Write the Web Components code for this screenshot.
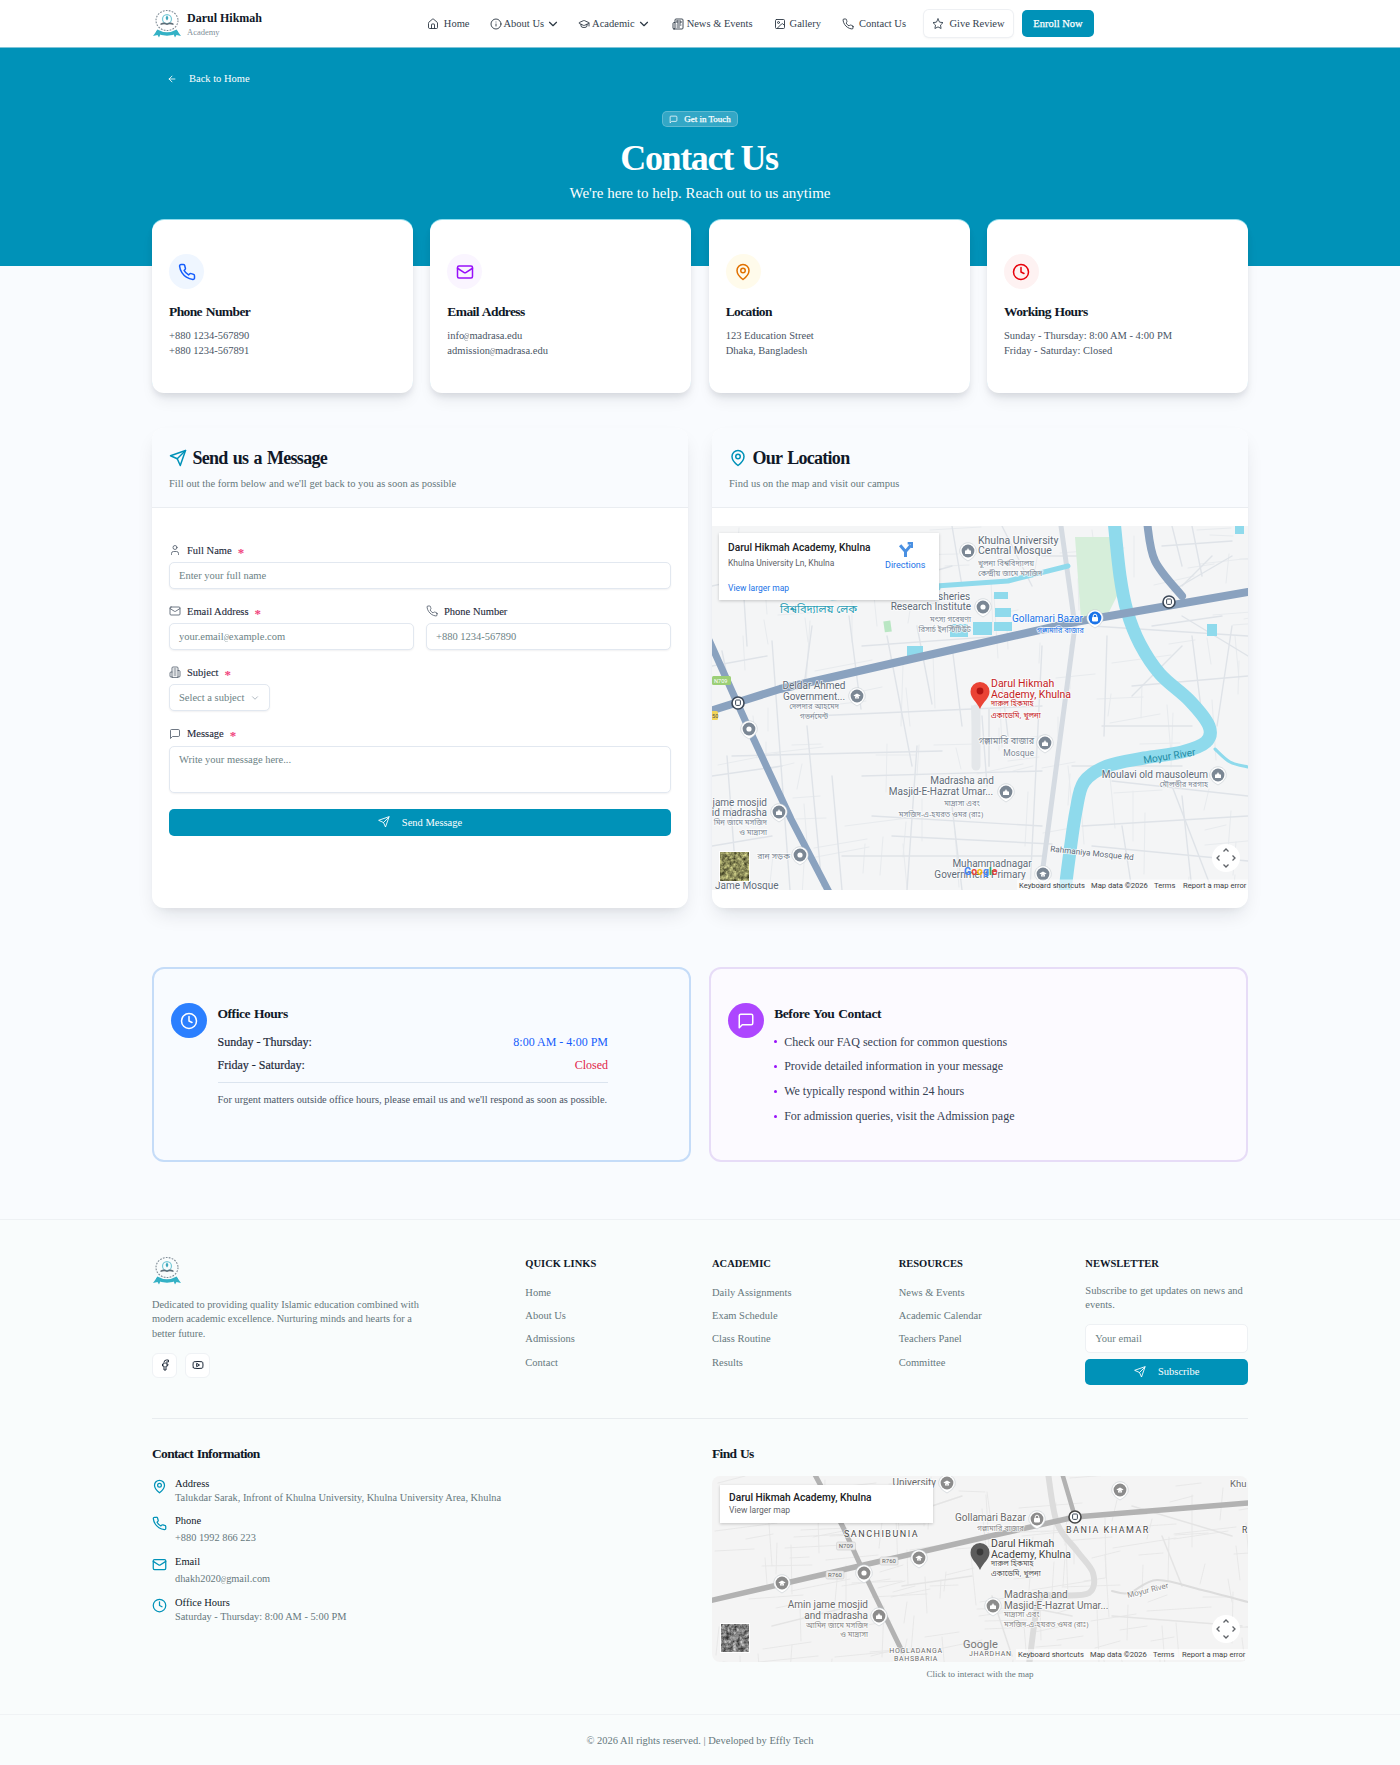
<!DOCTYPE html>
<html lang="en"><head><meta charset="utf-8"><title>Contact Us</title>
<style>
html,body{margin:0;padding:0;background:#f9fbfe;font-family:"Liberation Serif",serif;color:#0f172a}
</style></head>
<body>
<site-nav></site-nav>
<page-hero></page-hero>
<main-wrap>
  <div style="display:grid;grid-template-columns:repeat(4,1fr);gap:17.33px;margin-top:-47px;position:relative">
    <info-card icon="phone" tone="#155dfc" bg="#eff6ff" heading="Phone Number" l1="+880 1234-567890" l2="+880 1234-567891"></info-card>
    <info-card icon="mail" tone="#9810fa" bg="#faf5ff" heading="Email Address" l1="info@madrasa.edu" l2="admission@madrasa.edu"></info-card>
    <info-card icon="pin" tone="#e17100" bg="#fffbeb" heading="Location" l1="123 Education Street" l2="Dhaka, Bangladesh"></info-card>
    <info-card icon="clock" tone="#e7000b" bg="#fef2f2" heading="Working Hours" l1="Sunday - Thursday: 8:00 AM - 4:00 PM" l2="Friday - Saturday: Closed"></info-card>
  </div>
  <div style="display:grid;grid-template-columns:1fr 1fr;gap:24px;margin-top:35px">
    <panel-card icon="send" heading="Send us a Message" sub="Fill out the form below and we'll get back to you as soon as possible"><contact-form></contact-form></panel-card>
    <panel-card icon="pin" heading="Our Location" sub="Find us on the map and visit our campus" tight="1"><map-view kind="color"></map-view></panel-card>
  </div>
  <div style="display:grid;grid-template-columns:1fr 1fr;gap:17.33px;margin-top:59px">
    <hours-card></hours-card>
    <before-card></before-card>
  </div>
</main-wrap>
<site-footer></site-footer>
<script>
const P={
home:'<path d="M15 21v-8a1 1 0 0 0-1-1h-4a1 1 0 0 0-1 1v8"/><path d="M3 10a2 2 0 0 1 .709-1.528l7-5.999a2 2 0 0 1 2.582 0l7 5.999A2 2 0 0 1 21 10v9a2 2 0 0 1-2 2H5a2 2 0 0 1-2-2z"/>',
info:'<circle cx="12" cy="12" r="10"/><path d="M12 16v-4"/><path d="M12 8h.01"/>',
chev:'<path d="m6 9 6 6 6-6"/>',
cap:'<path d="M21.42 10.922a1 1 0 0 0-.019-1.838L12.83 5.18a2 2 0 0 0-1.66 0L2.6 9.08a1 1 0 0 0 0 1.832l8.57 3.908a2 2 0 0 0 1.66 0z"/><path d="M22 10v6"/><path d="M6 12.5V16a6 3 0 0 0 12 0v-3.5"/>',
news:'<path d="M4 22h16a2 2 0 0 0 2-2V4a2 2 0 0 0-2-2H8a2 2 0 0 0-2 2v16a2 2 0 0 1-2 2Zm0 0a2 2 0 0 1-2-2v-9c0-1.1.9-2 2-2h2"/><path d="M18 14h-8"/><path d="M15 18h-5"/><path d="M10 6h8v4h-8V6Z"/>',
image:'<rect x="3" y="3" width="18" height="18" rx="2"/><circle cx="9" cy="9" r="2"/><path d="m21 15-3.086-3.086a2 2 0 0 0-2.828 0L6 21"/>',
phone:'<path d="M22 16.92v3a2 2 0 0 1-2.18 2 19.79 19.79 0 0 1-8.63-3.07 19.5 19.5 0 0 1-6-6 19.79 19.79 0 0 1-3.07-8.67A2 2 0 0 1 4.11 2h3a2 2 0 0 1 2 1.72 12.84 12.84 0 0 0 .7 2.81 2 2 0 0 1-.45 2.11L8.09 9.91a16 16 0 0 0 6 6l1.27-1.27a2 2 0 0 1 2.11-.45 12.84 12.84 0 0 0 2.81.7A2 2 0 0 1 22 16.92z"/>',
star:'<polygon points="12 2 15.09 8.26 22 9.27 17 14.14 18.18 21.02 12 17.77 5.82 21.02 7 14.14 2 9.27 8.91 8.26 12 2"/>',
left:'<path d="m12 19-7-7 7-7"/><path d="M19 12H5"/>',
msg:'<path d="M21 15a2 2 0 0 1-2 2H7l-4 4V5a2 2 0 0 1 2-2h14a2 2 0 0 1 2 2z"/>',
mail:'<rect x="2" y="4" width="20" height="16" rx="2"/><path d="m22 7-8.97 5.7a1.94 1.94 0 0 1-2.06 0L2 7"/>',
pin:'<path d="M20 10c0 6-8 12-8 12s-8-6-8-12a8 8 0 0 1 16 0Z"/><circle cx="12" cy="10" r="3"/>',
clock:'<circle cx="12" cy="12" r="10"/><polyline points="12 6 12 12 16 14"/>',
send:'<path d="m22 2-7 20-4-9-9-4Z"/><path d="M22 2 11 13"/>',
user:'<path d="M19 21v-2a4 4 0 0 0-4-4H9a4 4 0 0 0-4 4v2"/><circle cx="12" cy="7" r="4"/>',
bld:'<path d="M6 22V4a2 2 0 0 1 2-2h8a2 2 0 0 1 2 2v18Z"/><path d="M6 12H4a2 2 0 0 0-2 2v6a2 2 0 0 0 2 2h2"/><path d="M18 9h2a2 2 0 0 1 2 2v9a2 2 0 0 1-2 2h-2"/><path d="M10 6h4"/><path d="M10 10h4"/><path d="M10 14h4"/><path d="M10 18h4"/>',
fb:'<path d="M18 2h-3a5 5 0 0 0-5 5v3H7v4h3v8h4v-8h3l1-4h-4V7a1 1 0 0 1 1-1h3z"/>',
yt:'<path d="M2.5 17a24.12 24.12 0 0 1 0-10 2 2 0 0 1 1.4-1.4 49.56 49.56 0 0 1 16.2 0A2 2 0 0 1 21.5 7a24.12 24.12 0 0 1 0 10 2 2 0 0 1-1.4 1.4 49.55 49.55 0 0 1-16.2 0A2 2 0 0 1 2.5 17"/><path d="m10 15 5-3-5-3z"/>'
};
const AT=s=>s.replace(/@/g,'<span style="display:inline-block;width:5.2px;font-size:7.6px;line-height:1;transform:scaleX(.74);transform-origin:0 50%;margin:0">@</span>');
function def(name,css,html,init){
  customElements.define(name,class extends HTMLElement{
    connectedCallback(){
      if(this.shadowRoot)return;
      const r=this.attachShadow({mode:'open'});
      const a=n=>this.getAttribute(n)||'';
      r.innerHTML='<style>'+css+'</style>'+(typeof html==='function'?html(a):html);
      if(init)init(r,a);
    }
  });
}
def('x-icon',':host{display:inline-flex;flex:none;line-height:0}svg{display:block}',a=>{
  const s=a('size')||12,w=a('sw')||2;
  return `<svg width="${s}" height="${s}" viewBox="0 0 24 24" fill="none" stroke="currentColor" stroke-width="${w}" stroke-linecap="round" stroke-linejoin="round">${P[a('n')]}</svg>`;
});
def('brand-logo',':host{display:inline-block;line-height:0}',a=>{
  const s=a('size')||30;
  return `<svg width="${s}" height="${s}" viewBox="0 0 60 60" fill="none">
  <ellipse cx="30" cy="23" rx="22" ry="20" stroke="#7d8a94" stroke-width="2.2" stroke-dasharray="3.500 2.500"/>
  <circle cx="30" cy="20" r="9" stroke="#79cbd8" stroke-width="2.500"/>
  <path d="M30 13c3 3 4 6 0 10-4-4-3-7 0-10z" fill="#3fa9bd"/>
  <path d="M17 29c6-3 9-2 13 0 4-2 7-3 13 0v3c-6-2-9-2-13 0-4-2-7-2-13 0z" fill="#5e6c76"/>
  <path d="M9 44q21 12 42 0" stroke="#34b1c5" stroke-width="7"/>
  <path d="M10 43l-8 11 9-2 3 5 4-9zM50 43l8 11-9-2-3 5-4-9z" fill="#34b1c5"/>
  </svg>`;
});
def('main-wrap',':host{display:block;width:1096px;margin:0 auto}','<slot></slot>');

def('nav-item',`:host{display:inline-flex;align-items:center;font-size:10.5px;color:#33414e;white-space:nowrap}x-icon{color:#2b3743}`,a=>
 `<x-icon n="${a('i')}" size="12" sw="1.8" style="margin-right:${a('g')||5}px"></x-icon><slot></slot>${a('m')?'<x-icon n="chev" size="14" sw="2" style="margin:0 0 0 2px"></x-icon>':''}`);
def('site-nav',`:host{display:block;background:#fff;border-bottom:1px solid #7fc4d8}
.in{height:47px;box-sizing:border-box;padding:0 306px 0 152px;display:flex;align-items:center}
.b{display:flex;align-items:center;gap:5px;margin-right:auto}
.t{display:flex;flex-direction:column;line-height:1}
.t b{font-size:12px;color:#101828;margin-top:2px}.t span{font-size:8.5px;color:#7f8f99;margin-top:4px}
.n{display:flex;align-items:center;gap:21px}
.btn{display:inline-flex;align-items:center;height:27px;box-sizing:border-box;border-radius:5px;font-size:10.5px;white-space:nowrap}
.g{width:89px;justify-content:center;gap:5px;background:#fff;color:#33414e;box-shadow:0 0 0 1px #eef0f3,0 1px 3px rgba(0,0,0,.08);margin-left:18px}
.e{width:72px;justify-content:center;background:#0092b8;color:#fff;margin-left:9px;-webkit-text-stroke:.25px #fff}`,
`<div class="in"><div class="b"><brand-logo size="30"></brand-logo><div class="t"><b>Darul Hikmah</b><span>Academy</span></div></div>
<div class="n"><nav-item i="home">Home</nav-item><nav-item i="info" m="1" g="2" style="margin-left:-1px">About Us</nav-item><nav-item i="cap" m="1" g="2" style="margin-left:-3px">Academic</nav-item><nav-item i="news" g="3">News &amp; Events</nav-item><nav-item i="image" g="4">Gallery</nav-item><nav-item i="phone" g="5">Contact Us</nav-item></div>
<span class="btn g"><x-icon n="star" size="12" sw="1.8"></x-icon>Give Review</span><span class="btn e">Enroll Now</span></div>`);
def('page-hero',`:host{display:block;background:#0092b8;color:#fff;height:218px;box-sizing:border-box;padding-top:23px}
.w{width:1096px;margin:0 auto;display:flex;flex-direction:column}
.back{display:flex;align-items:center;gap:12px;font-size:10.5px;line-height:16px;margin-left:15px}
.c{display:flex;flex-direction:column;align-items:center}
.bd{display:inline-flex;align-items:center;gap:6px;height:16px;padding:0 6px;box-sizing:border-box;border-radius:5px;background:rgba(255,255,255,.2);border:1px solid rgba(255,255,255,.22);font-size:9px;-webkit-text-stroke:.25px #fff;margin-top:24px}
h1{font-size:36px;line-height:40px;margin:11px 0 0;font-weight:700;letter-spacing:-1.35px;padding-right:2px}
p{font-size:15px;line-height:20px;margin:5px 0 0}`,
`<div class="w"><div class="back"><x-icon n="left" size="10" sw="2"></x-icon><span>Back to Home</span></div>
<div class="c"><span class="bd"><x-icon n="msg" size="9" sw="2"></x-icon>Get in Touch</span><h1>Contact Us</h1><p>We're here to help. Reach out to us anytime</p></div></div>`);
def('info-card',`:host{display:block;height:173px;margin-top:1px;box-sizing:border-box;background:#fff;border-radius:12px;padding:34px 17px 0;box-shadow:0 -1px 0 #8fdcec,0 4px 6px -1px rgba(15,23,42,.1),0 10px 15px -3px rgba(15,23,42,.07)}
.i{width:35px;height:35px;border-radius:50%;display:flex;align-items:center;justify-content:center}
h3{font-size:13.5px;line-height:18px;margin:14px 0 0;color:#101828;letter-spacing:-.6px;word-spacing:1px}
p{font-size:10.5px;line-height:15.2px;margin:7px 0 0;color:#4a5565}`,
a=>`<div class="i" style="background:${a('bg')};color:${a('tone')}"><x-icon n="${a('icon')}" size="18" sw="2"></x-icon></div><h3>${a('heading')}</h3><p>${AT(a('l1'))}<br>${AT(a('l2'))}</p>`);
def('panel-card',`:host{display:flex;flex-direction:column;height:480px;background:#fff;border-radius:12px;box-shadow:0 10px 20px -5px rgba(15,23,42,.12),0 4px 8px -4px rgba(15,23,42,.06);overflow:hidden}
.h{height:80px;box-sizing:border-box;padding:19px 17px 0;background:#f9fbfe;border-bottom:1px solid #eaedf1;flex:none}
.t{display:flex;align-items:center;gap:5.5px;color:#0092b8}
h2{font-size:18px;line-height:22px;margin:0;color:#101828;letter-spacing:-.72px;word-spacing:1.4px}
p{font-size:10.5px;line-height:14px;margin:8px 0 0;color:#66787c}
.b{flex:1;min-height:0}`,
a=>`<div class="h"><div class="t"><x-icon n="${a('icon')}" size="18" sw="2"></x-icon><h2>${a('heading')}</h2></div><p>${a('sub')}</p></div><div class="b" style="padding:${a('tight')?'18px 0 0':'32px 17px 0'}"><slot></slot></div>`);
def('form-field',`:host{display:block}
.l{display:flex;align-items:center;gap:6px;height:20px;font-size:10.5px;font-weight:400;color:#1d2939;-webkit-text-stroke:.1px #1d2939}
.l x-icon{color:#4a5565}
.s{color:#f0447c;font-size:13px;font-weight:700;line-height:1;-webkit-text-stroke:0;position:relative;top:2px}
.ctl{margin-top:2px;box-sizing:border-box;border:1px solid #e2e8f0;border-radius:5px;background:#fff;height:27px;padding:0 9px;display:flex;align-items:center;font-size:10.5px;color:#6c8285;box-shadow:0 1px 2px rgba(15,23,42,.06)}`,
a=>`<div class="l"><x-icon n="${a('i')}" size="12" sw="1.6"></x-icon>${a('label')}${a('req')?'<span class="s">*</span>':''}</div><div class="ctl" style="${a('cs')}"><span>${AT(a('ph'))}</span><slot></slot></div>`);
def('contact-form',`:host{display:block}
.c{display:flex;flex-direction:column;gap:12.2px}
.r{display:grid;grid-template-columns:1fr 1fr;gap:12px}
.btn{height:27px;border-radius:5px;background:#0092b8;color:#fff;display:flex;align-items:center;justify-content:center;gap:12px;font-size:10.5px;margin-top:4px}`,
`<div class="c"><form-field i="user" label="Full Name" req="1" ph="Enter your full name"></form-field>
<div class="r"><form-field i="mail" label="Email Address" req="1" ph="your.email@example.com"></form-field><form-field i="phone" label="Phone Number" ph="+880 1234-567890"></form-field></div>
<form-field i="bld" label="Subject" req="1" ph="Select a subject" cs="width:101px;justify-content:space-between"><x-icon n="chev" size="10" sw="1.6" style="color:#8a97a3"></x-icon></form-field>
<form-field i="msg" label="Message" req="1" ph="Write your message here..." cs="height:47px;align-items:flex-start;padding-top:7px"></form-field>
<div class="btn"><x-icon n="send" size="12" sw="1.8"></x-icon>Send Message</div></div>`);
def('hours-card',`:host{display:flex;gap:10.5px;height:195px;box-sizing:border-box;background:#f8fbff;border:2px solid #c5dcf8;border-radius:12px;padding:34px 17px 0 17px}
.i{width:36px;height:35px;border-radius:50%;background:#2b7fff;color:#fff;display:flex;align-items:center;justify-content:center;flex:none}
.m{width:390.5px;padding-top:2px}
h3{font-size:13.5px;line-height:18px;margin:0 0 11px;color:#101828;letter-spacing:-.45px;word-spacing:1px}
.r{display:flex;justify-content:space-between;font-size:12px;line-height:16px;margin-bottom:7px;color:#1d2939;-webkit-text-stroke:.2px #1d2939}
.r span{-webkit-text-stroke:0}
hr{border:0;border-top:1px solid #dbe4ef;margin:0}
p{font-size:10.4px;line-height:14px;margin:10px 0 0;color:#4a5565;white-space:nowrap}`,
`<div class="i"><x-icon n="clock" size="18" sw="2"></x-icon></div><div class="m"><h3>Office Hours</h3>
<div class="r">Sunday - Thursday:<span style="color:#155dfc">8:00 AM - 4:00 PM</span></div><div class="r" style="margin-bottom:9px">Friday - Saturday:<span style="color:#e11d48">Closed</span></div><hr><p>For urgent matters outside office hours, please email us and we'll respond as soon as possible.</p></div>`);
def('before-card',`:host{display:flex;gap:10.5px;height:195px;box-sizing:border-box;background:#fcfaff;border:2px solid #e7dcf7;border-radius:12px;padding:34px 17px 0 17px}
.i{width:36px;height:35px;border-radius:50%;background:#ad46ff;color:#fff;display:flex;align-items:center;justify-content:center;flex:none}
.m{padding-top:2px}
h3{font-size:13.5px;line-height:18px;margin:0 0 10.5px;color:#101828;letter-spacing:-.42px;word-spacing:1px}
ul{list-style:none;margin:0;padding:0}
li{font-size:12px;line-height:16px;margin-bottom:8.9px;color:#364153;display:flex;align-items:center;gap:7px}
li::before{content:"";width:3px;height:3px;border-radius:50%;background:#9810fa}`,
`<div class="i"><x-icon n="msg" size="18" sw="2"></x-icon></div><div class="m"><h3>Before You Contact</h3><ul><li>Check our FAQ section for common questions</li><li>Provide detailed information in your message</li><li>We typically respond within 24 hours</li><li>For admission queries, visit the Admission page</li></ul></div>`);
def('footer-col',`:host{display:block}
h4{font-size:10.5px;line-height:14px;margin:0 0 15px;color:#101828}
.l{display:flex;flex-direction:column;gap:8.8px;font-size:10.5px;line-height:14.4px;color:#66787c}`,
a=>`<h4>${a('t')}</h4><div class="l">${a('links').split('|').map(x=>`<span>${x}</span>`).join('')}</div>`);
def('contact-line',`:host{display:flex;gap:8px}
x-icon{color:#0092b8;margin-top:2px}
b{display:block;font-weight:400;font-size:10.5px;line-height:14px;color:#101828}
div span.v{display:block;font-size:10.35px;line-height:14px;color:#66787c}`,
a=>`<x-icon n="${a('i')}" size="15" sw="2"></x-icon><div><b>${a('k')}</b><span class="v" style="margin-top:${a('g')||0}px">${AT(a('v'))}</span></div>`);
def('site-footer',`:host{display:block;background:#f9fcfc;border-top:1px solid #eef1f4;margin-top:57px}
.w{width:1096px;margin:0 auto}
.top{display:grid;grid-template-columns:repeat(6,1fr);gap:24px;padding:37px 0 0;height:199px;box-sizing:border-box;border-bottom:1px solid #e8ecef}
.b{grid-column:span 2}
.lg{margin-top:-1px;line-height:0}
.b p{font-size:10.35px;line-height:14.4px;color:#66787c;margin:12px 0 0;width:280px}
.s{display:flex;gap:8px;margin-top:11.5px}
.s span{width:25px;height:25px;box-sizing:border-box;border-radius:6px;background:#fff;border:1px solid #eff2f5;display:flex;align-items:center;justify-content:center;color:#1d2939}
.news h4{font-size:10.5px;line-height:14px;margin:0 0 12.5px;color:#101828}
.news p{font-size:10.5px;line-height:14.6px;margin:0;color:#66787c}
.inp{height:29px;box-sizing:border-box;border:1px solid #eef1f4;border-radius:5px;background:#fff;display:flex;align-items:center;padding:0 9px;font-size:10.5px;color:#6c8285;margin-top:11px}
.btn{height:26px;border-radius:5px;background:#0092b8;color:#fff;display:flex;align-items:center;justify-content:center;gap:12px;font-size:10.5px;margin-top:6px}
.two{display:grid;grid-template-columns:1fr 1fr;gap:24px;padding-top:27px;height:295px;box-sizing:border-box}
h3{font-size:13.5px;line-height:16px;margin:0;color:#101828;letter-spacing:-.68px;word-spacing:1px}
.cl{display:flex;flex-direction:column;gap:10px;margin-top:15px}
.cap{text-align:center;font-size:9px;line-height:12px;color:#66787c;margin-top:6px}
.mp{margin-top:14px;height:186px}
.bot{border-top:1px solid #f0f3f5;height:50px;box-sizing:border-box;padding-top:2px;display:flex;align-items:center;justify-content:center;font-size:10.5px;color:#66787c}`,
`<div class="w"><div class="top"><div class="b"><div class="lg"><brand-logo size="30"></brand-logo></div><p>Dedicated to providing quality Islamic education combined with modern academic excellence. Nurturing minds and hearts for a better future.</p><div class="s"><span><x-icon n="fb" size="12" sw="2"></x-icon></span><span><x-icon n="yt" size="12" sw="2"></x-icon></span></div></div>
<footer-col t="QUICK LINKS" links="Home|About Us|Admissions|Contact"></footer-col>
<footer-col t="ACADEMIC" links="Daily Assignments|Exam Schedule|Class Routine|Results"></footer-col>
<footer-col t="RESOURCES" links="News &amp; Events|Academic Calendar|Teachers Panel|Committee"></footer-col>
<div class="news"><h4>NEWSLETTER</h4><p>Subscribe to get updates on news and events.</p><div class="inp">Your email</div><div class="btn"><x-icon n="send" size="12" sw="1.8"></x-icon>Subscribe</div></div></div>
<div class="two"><div><h3>Contact Information</h3><div class="cl">
<contact-line i="pin" k="Address" v="Talukdar Sarak, Infront of Khulna University, Khulna University Area, Khulna" style="margin-bottom:-1px"></contact-line>
<contact-line i="phone" k="Phone" v="+880 1992 866 223" g="3"></contact-line>
<contact-line i="mail" k="Email" v="dhakh2020@gmail.com" g="3"></contact-line>
<contact-line i="clock" k="Office Hours" v="Saturday - Thursday: 8:00 AM - 5:00 PM"></contact-line></div></div>
<div><h3>Find Us</h3><div class="mp"><map-view kind="gray"></map-view></div><div class="cap">Click to interact with the map</div></div></div></div>
<div class="bot">&copy; 2026 All rights reserved. | Developed by Effly Tech</div>`);

let DY=0;
function T(x,y,s,sz,fill,o){o=o||{};y+=DY;return `<text x="${x}" y="${y}" font-size="${sz}" fill="${fill}" ${o.a?`text-anchor="${o.a}"`:''} ${o.b?'font-weight="700"':''} ${o.r?`transform="rotate(${o.r} ${x} ${y})"`:''} ${o.ls?`letter-spacing="${o.ls}"`:''} paint-order="stroke" stroke="${o.ns?'none':'#fff'}" stroke-width="${o.ns?0:1.6}" stroke-opacity=".75">${s}</text>`}
function L(pts,c,w){return `<polyline points="${pts}" fill="none" stroke="${c}" stroke-width="${w}" stroke-linejoin="round" stroke-linecap="round"/>`}
function S(p,c,w){let d=`M${p[0][0]} ${p[0][1]}`;
  for(let i=0;i<p.length-1;i++){const a=p[i-1]||p[i],b=p[i],e=p[i+1],f=p[i+2]||e;
    d+=`C${(b[0]+(e[0]-a[0])/6).toFixed(1)} ${(b[1]+(e[1]-a[1])/6).toFixed(1)} ${(e[0]-(f[0]-b[0])/6).toFixed(1)} ${(e[1]-(f[1]-b[1])/6).toFixed(1)} ${e[0]} ${e[1]}`}
  return `<path d="${d}" fill="none" stroke="${c}" stroke-width="${w}" stroke-linecap="round"/>`}
function alleys(W,H,n,c,w,seed){let s='',r=seed;const R=()=>(r=(r*16807)%2147483647)/2147483647;
  for(let i=0;i<n;i++){const x=R()*W,y=R()*H,l=18+R()*46,v=R()<.5;
    const dx=v?(R()-.5)*10:l,dy=v?l:(R()-.5)*10-(l*.12);
    s+=`<path d="M${x.toFixed(0)} ${y.toFixed(0)}l${dx.toFixed(0)} ${dy.toFixed(0)}" stroke="${c}" stroke-width="${w}" stroke-linecap="round" fill="none"/>`;}
  return s}
function POI(x,y,c,k){
  let inner='';
  if(k==='m')inner=`<path d="M${x-3} ${y+3}v-3l1.5-1.5v1.5l1.5-3 1.5 3v-1.5l1.5 1.5v3z" fill="#fff"/>`;
  if(k==='c')inner=`<path d="M${x-3.6} ${y-.6}l3.6-2 3.6 2-3.6 2zM${x-2} ${y+.8}v1.6h4v-1.6l-2 1z" fill="#fff"/>`;
  if(k==='o')inner=`<circle cx="${x}" cy="${y}" r="2.6" fill="#fff"/>`;
  if(k==='l')inner=`<rect x="${x-3}" y="${y-1}" width="6" height="4.4" rx=".8" fill="#fff"/><path d="M${x-1.8} ${y-1}v-1a1.8 1.8 0 0 1 3.6 0v1" stroke="#fff" fill="none"/>`;
  return `<path d="M${x-7.8} ${y+2.5}a8.2 8.2 0 1 1 15.6 0q-2.2 5-7.8 7.5q-5.6-2.5-7.8-7.5z" fill="#fff" stroke="#b9c0c7" stroke-width=".5"/><circle cx="${x}" cy="${y}" r="6.4" fill="${c}"/>${inner}`;
}
function BUS(x,y,c){return `<circle cx="${x}" cy="${y}" r="6" fill="#fff" stroke="${c}" stroke-width="1.6"/><rect x="${x-2.4}" y="${y-3}" width="4.8" height="5.4" rx="1" fill="none" stroke="#3c4858" stroke-width="1"/>`}
function FS(x,y){const g='#5f6368';return `<circle cx="${x}" cy="${y}" r="14" fill="#fff"/><g fill="none" stroke="${g}" stroke-width="1.3"><path d="M${x-2.5} ${y-6.5}l2.5-2.5 2.5 2.5M${x-2.5} ${y+6.5}l2.5 2.5 2.5-2.5M${x-6.5} ${y-2.5}l-2.5 2.5 2.5 2.5M${x+6.5} ${y-2.5}l2.5 2.5-2.5 2.5"/></g>`}
function thumb(x,y,w,h,m){return `<filter id="sat" x="0" y="0" width="100%" height="100%" color-interpolation-filters="sRGB"><feTurbulence type="fractalNoise" baseFrequency=".28" numOctaves="3" seed="4"/><feColorMatrix values="${m}"/></filter><rect x="${x-1}" y="${y-1}" width="${w+2}" height="${h+2}" fill="#fff"/><rect x="${x}" y="${y}" width="${w}" height="${h}" filter="url(#sat)"/>`}
function attrib(y,xs,fill){const t=['Keyboard shortcuts','Map data &#169;2026','Terms','Report a map error'];
  return `<rect x="${xs[0]-2}" y="${y+DY-8}" width="${536-xs[0]+2}" height="11" fill="#fff" opacity=".6"/>`+t.map((s,i)=>T(xs[i],y,s,7.6,fill,{ns:1})).join('')}
const BN='"Noto Sans","Noto Sans Bengali","Lohit Bengali","DejaVu Sans",sans-serif';
function colorMap(){
  DY=0;
  const st='#dfe3e8';let s=`<rect width="536" height="364" fill="#f4f5f6"/>`;
  s+=alleys(536,364,120,'#e8ebee',1,7331);
  [[137,90,149,183],[60,115,78,364],[10,125,20,175],[175,110,200,240],[205,100,220,178],[240,120,250,200],[260,180,262,240],[290,160,296,210],[330,120,318,364],[395,110,392,210],[420,170,470,120],[440,100,510,90],[470,90,536,130],[420,160,536,150],[390,200,480,200],[150,250,330,245],[20,230,230,225],[100,190,330,180],[160,290,330,300],[180,310,340,318],[370,300,536,290],[380,320,536,335],[400,255,536,270],[460,260,500,364],[380,100,536,110],[480,110,490,190],[520,100,505,200],[150,120,360,105],[170,60,240,40],[240,0,250,60],[0,60,90,40],[30,40,35,120],[0,140,55,130],[100,100,92,160],[95,200,110,360],[205,220,195,364],[240,280,250,364],[270,190,275,260],[360,240,470,240],[0,250,70,240],[15,230,25,364],[120,250,130,364],[0,320,60,310],[130,330,330,330],[410,300,420,364],[470,270,480,364],[290,0,320,60],[330,30,400,30],[450,20,520,15],[460,0,470,40],[480,0,490,50],[500,30,470,60],[460,65,520,30]].forEach(q=>{s+=L(`${q[0]},${q[1]} ${q[2]},${q[3]}`,st,1.4)});
  s+=L('264,183 264,240',"#e4e7ea",9)+L('277,183 277,240',"#e4e7ea",2);
  s+=`<path d="M363 11l36 0 8 55-10 20-28 8z" fill="#d6eeda"/><rect x="172" y="95" width="7" height="11" fill="#b9e6c3" transform="rotate(-8 175 100)"/>`;
  s+=L('349,0 363,100 328,364','#d5dbe2',5);
  [[261,96,19,13],[238,98,18,13],[282,96,18,9],[283,82,16,9],[282,66,14,7],[195,120,16,10],[495,98,10,12],[523,0,9,8]].forEach(q=>s+=`<rect x="${q[0]}" y="${q[1]}" width="${q[2]}" height="${q[3]}" fill="#8fdaec"/>`);
  s+=L('224,60 296,55 356,40','#8fdaec',5)+L('120,72 226,62','#8fdaec',5);
  s+=S([[402,-6],[408,50],[415,85],[428,118],[448,148],[478,175],[497,200],[494,216],[470,226],[432,232],[395,240],[372,256],[364,285],[358,325],[352,372]],'#8fdaec',13);
  s+=S([[503,223],[518,236],[536,241]],'#8fdaec',3);
  const rd='#8aa2bf';
  s+=L('-5,186 68,163 208,131 363,96 536,66',rd,8)+L('-3,114 37,203 79,293 118,368',rd,7)+S([[435,-4],[443,35],[470,70]],rd,8);
  s+=`<rect x="0" y="150" width="19" height="9" rx="1.5" fill="#9ccf76"/>`+T(2,157,'N709',5.6,'#fff',{ns:1});
  s+=`<rect x="-3" y="185" width="9" height="9" rx="1.5" fill="#f3d558"/>`+T(0,192,'50',5.6,'#555',{ns:1});
  const g='#5f6b78',g2='#7b8794';
  s+=POI(256,25,'#7b8794','m')+POI(271,81,'#7b8794','o')+POI(383,92,'#1a73e8','l')+POI(145,170,'#7b8794','c')+POI(37,203,'#7b8794','o')+POI(333,217,'#7b8794','m')+POI(294,266,'#7b8794','m')+POI(506,249,'#7b8794','m')+POI(67,286,'#7b8794','m')+POI(88,329,'#7b8794','o')+POI(331,348,'#7b8794','c');
  s+=BUS(457,76,'#3c4858')+BUS(26,177,'#3c4858');
  DY=1.5;
  s+=T(266,16,'Khulna University',10.5,g)+T(266,26,'Central Mosque',10.5,g);
  s+=T(226,72,'sheries',10,g)+T(259,82,'Research Institute',10,g,{a:'end'});
  s+=T(300,94,'Gollamari Bazar',10,'#1a73e8');
  s+=T(102,161,'Deldar Ahmed',10,g,{a:'middle'})+T(102,172,'Government...',10,g,{a:'middle'});
  s+=T(322,228,'Mosque',8.5,g2,{a:'end'});
  s+=T(250,256,'Madrasha and',10,g,{a:'middle'})+T(229,267,'Masjid-E-Hazrat Umar...',10,g,{a:'middle'});
  s+=T(496,250,'Moulavi old mausoleum',10,g,{a:'end'});
  s+=T(432,236,'Moyur River',10,'#1e8aa3',{r:-9,ns:1});
  s+=T(338,324,'Rahmaniya Mosque Rd',8.2,g,{r:6});
  s+=T(55,278,'jame mosjid',10,g,{a:'end'})+T(55,288,'id madrasha',10,g,{a:'end'});
  s+=T(3,361,'Jame Mosque',10,g);
  s+=T(280,339,'Muhammadnagar',10,g,{a:'middle'})+T(268,350,'Government Primary',10,g,{a:'middle'});
  s+=`<path d="M268 156a9.5 9.5 0 0 1 9.5 9.5c0 7-6 9.5-9.500 17.500c-3.500-8-9.500-10.500-9.500-17.500A9.500 9.500 0 0 1 268 156z" fill="#ea4335"/><circle cx="268" cy="165" r="3.400" fill="#b31412"/>`;
  s+=T(279,159,'Darul Hikmah',10.5,'#c5221f')+T(279,170,'Academy, Khulna',10.5,'#c5221f');
  s+=`<g font-family='${BN}'>`+T(266,38,'খুলনা বিশ্ববিদ্যালয়',7.6,g2)+T(266,48,'কেন্দ্রীয় জামে মসজিদ',7.6,g2)+T(259,94,'মৎস্য গবেষণা',7.6,g2,{a:'end'})+T(259,104,'রিসার্চ ইনস্টিটিউট',7.6,g2,{a:'end'})+T(68,85,'বিশ্ববিদ্যালয় লেক',11,'#2a9db5')+T(325,105,'গল্লামারি বাজার',7.6,'#1a73e8')+T(102,181,'দেলদার আহমেদ',7.6,g2,{a:'middle'})+T(102,191,'গভর্নমেন্ট',7.6,g2,{a:'middle'})+T(279,178,'দারুল হিকমাহ',7.6,'#c5221f')+T(279,190,'একাডেমি, খুলনা',7.6,'#c5221f')+T(322,216,'গল্লামারি বাজার',9,g2,{a:'end'})+T(250,278,'মাদ্রাসা এবং',7.6,g2,{a:'middle'})+T(229,289,'মসজিদ-এ-হযরত ওমর (রাঃ)',7.6,g2,{a:'middle'})+T(496,259,'মৌলভীর দরগাহ',7.6,g2,{a:'end'})+T(55,297,'মিন জামে মসজিদ',7.6,g2,{a:'end'})+T(55,307,'ও মাদ্রাসা',7.6,g2,{a:'end'})+T(78,331,'রান সড়ক',8.5,g2,{a:'end'})+`</g>`;
  s+=thumb(8,326,29,29,'1 0 0 0 .05 1 0 0 0 .05 .7 0 0 0 0 0 0 0 0 1');
  s+=`<text x="252" y="348.500" font-size="10.500" font-weight="700"><tspan fill="#4285f4">G</tspan><tspan fill="#ea4335">o</tspan><tspan fill="#fbbc05">o</tspan><tspan fill="#4285f4">g</tspan><tspan fill="#34a853">l</tspan><tspan fill="#ea4335">e</tspan></text>`;
  s+=attrib(360,[307,379,442,471],'#3c4043')+FS(514,332);
  DY=0;
  return s;
}
function grayMap(){
  DY=0;
  let s=`<rect width="536" height="186" fill="#f4f4f4"/>`;
  s+=alleys(536,186,150,'#e7e7e7',.9,90421);
  [[220,30,250,20],[280,120,300,180],[60,150,140,130],[420,30,520,60],[400,140,530,150],[450,60,470,110],[190,110,260,100],[310,130,360,140]].forEach(q=>s+=L(`${q[0]},${q[1]} ${q[2]},${q[3]}`,'#e4e4e4',1.5));
  s+=S([[336,-3],[345,47],[365,75],[381,97],[377,117],[345,120],[327,125],[317,190]],'#dcdcdc',6)+S([[400,115],[417,117],[445,104],[490,114],[536,126]],'#dcdcdc',2);
  s+=L('-3,125 143,91 274,61 363,41 536,27','#b2b2b2',5.500)+L('102,-3 131,51 152,97 190,175','#b2b2b2',5)+L('350,-3 363,41','#b2b2b2',4.500);
  const g='#6b6b6b',d='#4a4a4a';
  const sh=(x,y,w,t)=>`<rect x="${x-w/2}" y="${y-4}" width="${w}" height="8" rx="1.500" fill="#ececec" stroke="#cfcfcf" stroke-width=".6"/>`+T(x,y+2.2,t,6,'#666',{a:'middle',ns:1});
  s+=sh(134,70,19,'N709')+sh(177,85,18,'R760')+sh(123,99,18,'R760');
  s+=POI(235,7,'#8c8c8c','c')+POI(408,14,'#8c8c8c','c')+POI(325,43,'#8c8c8c','l')+POI(207,82,'#8c8c8c','c')+POI(152,97,'#8c8c8c','o')+POI(70,107,'#8c8c8c','c')+POI(167,140,'#8c8c8c','m')+POI(281,130,'#8c8c8c','m')+BUS(363,41,'#444');
  s+=T(224,10,'University',10,g,{a:'end'})+T(132,61,'SANCHIBUNIA',9,d,{ls:1.5})+T(243,45,'Gollamari Bazar',10,g)+T(354,57,'BANIA KHAMAR',9,d,{ls:1.5})+T(518,11,'Khu',9.500,g)+T(530,57,'R',8.500,d);
  s+=T(292,122,'Madrasha and',10,g)+T(292,133,'Masjid-E-Hazrat Umar...',10,g)+T(156,132,'Amin jame mosjid',10,g,{a:'end'})+T(156,143,'and madrasha',10,g,{a:'end'});
  s+=T(416,122,'Moyur River',8,'#8a8a8a',{r:-14});
  s+=T(204,177,'HOGLADANGA',7,g,{a:'middle',ls:.7})+T(204,185,'BAHSBARIA',7,g,{a:'middle',ls:.7})+T(257,180,'JHARDHAN',7,g,{ls:.7});
  s+=`<path d="M268 67a9.500 9.500 0 0 1 9.500 9.500c0 7-6 9.500-9.500 17.500c-3.500-8-9.500-10.500-9.500-17.500A9.500 9.500 0 0 1 268 67z" fill="#5c5c5c"/><circle cx="268" cy="76" r="3.400" fill="#3a3a3a"/>`;
  s+=T(279,71,'Darul Hikmah',10.500,'#444')+T(279,82,'Academy, Khulna',10.500,'#444');
  s+=`<g font-family='${BN}'>`+T(265,55,'গল্লামারি বাজার',7.600,'#888')+T(279,90,'দারুল হিকমাহ',7.600,'#555')+T(279,100,'একাডেমি, খুলনা',7.600,'#555')+T(292,141,'মাদ্রাসা এবং',7.600,'#888')+T(292,151,'মসজিদ-এ-হযরত ওমর (রাঃ)',7.600,'#888')+T(156,152,'আমিন জামে মসজিদ',7.600,'#888',{a:'end'})+T(156,161,'ও মাদ্রাসা',7.600,'#888',{a:'end'})+`</g>`;
  s+=thumb(9,148,28,28,'1 0 0 0 0 1 0 0 0 0 1 0 0 0 0 0 0 0 0 1');
  s+=T(251,172,'Google',11,'#777',{ns:1});
  s+=attrib(181,[306,378,441,470],'#444')+FS(514,153);
  return s;
}
def('map-view',`:host{display:block;position:relative;font-family:Roboto,sans-serif;overflow:hidden}
svg{display:block}
.card{position:absolute;background:#fff;box-sizing:border-box;box-shadow:0 1px 3px rgba(0,0,0,.2);color:#202124}
.card b{position:absolute;white-space:nowrap;font-weight:500;font-size:10.2px;line-height:13px}
.card span{position:absolute;white-space:nowrap;font-size:8.500px;line-height:11px}
.dir{position:absolute;color:#1a73e8;display:flex;flex-direction:column;align-items:center;gap:3px}`,
a=>{
 const col=a('kind')==='color';
 const svg=`<svg width="536" height="${col?364:186}" viewBox="0 0 536 ${col?364:186}" style="${col?'':'border-radius:8px'}">${col?colorMap():grayMap()}</svg>`;
 const card=col?`<div class="card" style="left:7px;top:7px;width:220px;height:67px"><b style="left:9px;top:8px">Darul Hikmah Academy, Khulna</b><span style="left:9px;top:25px;color:#5f6368">Khulna University Ln, Khulna</span><span style="left:9px;top:50px;color:#1a73e8">View larger map</span><div class="dir" style="left:166px;top:9px"><svg width="15" height="15" viewBox="0 0 14 14"><path d="M7 14V9L2 3M7 9l5-6M9 1h4.500v4.500" fill="none" stroke="#4a90e2" stroke-width="2.800"/></svg><span style="position:static;font-size:9px">Directions</span></div></div>`
 :`<div class="card" style="left:8px;top:9px;width:213px;height:38px"><b style="left:9px;top:6px">Darul Hikmah Academy, Khulna</b><span style="left:9px;top:20px;color:#5f6368">View larger map</span></div>`;
 return svg+card;
});
</script>
</body></html>
